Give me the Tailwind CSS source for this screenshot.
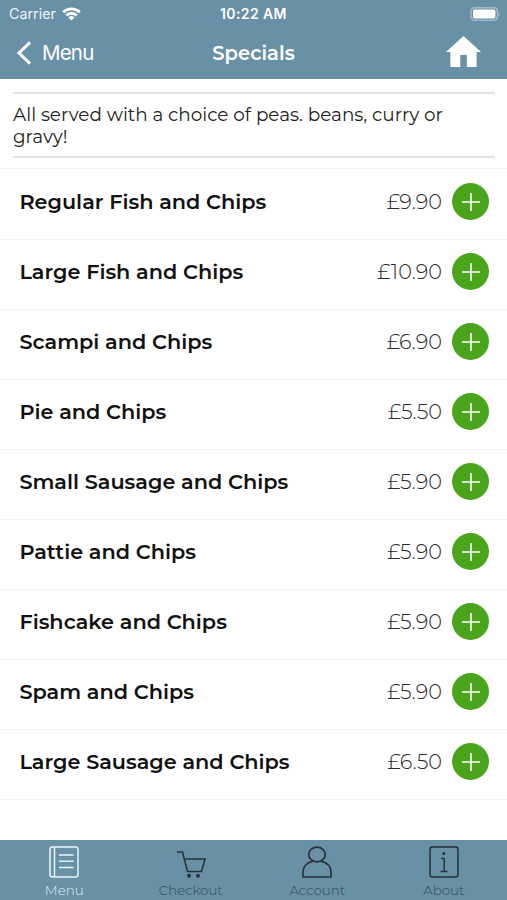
<!DOCTYPE html>
<html lang="en">
<head>
    <meta charset="UTF-8">
    <meta name="viewport" content="width=device-width, initial-scale=1.0">
    <script src="https://cdn.jsdelivr.net/npm/@tailwindcss/browser@4"></script>
    <title>Specials</title>
</head>
<body class="flex flex-col h-screen overflow-hidden bg-white font-['Montserrat','Inter',sans-serif] text-[#111]">
    <header class="h-[79px] shrink-0 bg-[#6890a7] text-white">
        <div class="grid grid-cols-3 items-center h-[27px] px-[9px] font-['Inter',sans-serif]">
            <div class="flex items-center gap-[6px] text-[14.3px] text-[#eef4f7]">
                <span>Carrier</span>
                <svg class="w-[19px] h-[14px]" viewBox="0 0 19 14" fill="none" stroke="#fff" stroke-width="2.7">
                    <path d="M1.2 5.2a12 12 0 0 1 16.6 0M4.3 8.5a7.6 7.6 0 0 1 10.4 0"/>
                    <path d="M9.5 13.6 6.4 10.4a4.6 4.6 0 0 1 6.2 0z" fill="#fff" stroke="none"/>
                </svg>
            </div>
            <span class="text-center text-[14px] tracking-[0.4px] font-semibold">10:22 AM</span>
            <svg class="justify-self-end -mr-[3px] w-[31px] h-[14px]" viewBox="0 0 31 14">
                <rect x="1" y=".8" width="26.5" height="12.4" rx="3.6" fill="none" stroke="#a0bac8" stroke-width="1.6"/>
                <rect x="3" y="2.6" width="22.4" height="8.8" rx="1.6" fill="#fff"/>
                <path d="M28.8 5a2.4 2.4 0 0 1 0 4z" fill="#a0bac8"/>
            </svg>
        </div>
        <div class="grid grid-cols-3 items-center h-[51px] pl-4 pr-[26px]">
            <button class="flex items-center gap-[10px] text-[20.5px] tracking-[-0.8px] font-['Inter',sans-serif]">
                <svg class="w-4 h-6" viewBox="0 0 16 24" fill="none" stroke="currentColor" stroke-width="3"><path d="M14 1.3 3 12l11 10.7"/></svg>
                <span class="pt-[2px]">Menu</span>
            </button>
            <h1 class="pl-[10px] pt-[2px] text-center text-[19.6px] font-semibold">Specials</h1>
            <svg class="justify-self-end mb-[2px] w-[35px] h-[31px]" viewBox="0 0 35 31" fill="currentColor"><path d="M17.5 0 35 16h-4.4v15H20.8V19h-6.5v12H4.4V16H0z"/></svg>
        </div>
    </header>

    <main class="flex-1">
        <p class="ml-[13px] mr-3 mt-[13px] mb-[11px] h-[66px] border-y-2 border-[#e2e4e4] pt-[10px] text-[18.4px] leading-[22px] text-[#222]">All served with a choice of peas. beans, curry or gravy!</p>
        <ul id="items" class="-mt-px border-t border-[#f4f4f4] pt-px"></ul>
    </main>

    <nav class="grid grid-cols-4 h-[60px] shrink-0 bg-[#6890a7] pl-[1px] text-[13.4px] font-light text-[#354c5a]">
        <a class="flex flex-col items-center gap-[2px] pt-[6px] text-[#dcebf3]">
            <svg class="w-8 h-8" viewBox="0 0 32 32" fill="none" stroke="#e9f4fa" stroke-width="1.5"><rect x="2" y="1" width="28" height="30" rx="2.5"/><path d="M6.5 1v30M11 9h14.5M11 15.2h14.5M11 21.4h14.5"/></svg>
            <span>Menu</span>
        </a>
        <a class="flex flex-col items-center gap-[2px] pt-[6px]">
            <svg class="w-8 h-8" viewBox="0 0 32 32" fill="none" stroke="#283238" stroke-width="1.6"><path d="M2 6h5.5l5 19.5h14L30 13H9.5"/><circle cx="14" cy="29.7" r="1.2" fill="#283238"/><circle cx="23" cy="29.7" r="1.2" fill="#283238"/></svg>
            <span>Checkout</span>
        </a>
        <a class="flex flex-col items-center gap-[2px] pt-[6px]">
            <svg class="w-8 h-8" viewBox="0 0 32 32" fill="none" stroke="#283238" stroke-width="1.7"><ellipse cx="16" cy="8.5" rx="8.3" ry="7.3"/><path d="M12 15.2C6 16.5 2 20.5 2 26.5V31h28v-4.5c0-6-4-10-10-11.300"/></svg>
            <span>Account</span>
        </a>
        <a class="flex flex-col items-center gap-[2px] pt-[6px]">
            <svg class="w-8 h-8" viewBox="0 0 32 32" fill="none" stroke="#283238" stroke-width="1.5"><rect x="2" y="1" width="28" height="30" rx="2.5"/><path d="M13 12.5h3.2V25M12.5 25.5h7"/><circle cx="15.8" cy="7.5" r=".8" fill="#283238"/></svg>
            <span>About</span>
        </a>
    </nav>

    <script>
        const items = [
            ["Regular Fish and Chips", "9.90"],
            ["Large Fish and Chips", "10.90"],
            ["Scampi and Chips", "6.90"],
            ["Pie and Chips", "5.50"],
            ["Small Sausage and Chips", "5.90"],
            ["Pattie and Chips", "5.90"],
            ["Fishcake and Chips", "5.90"],
            ["Spam and Chips", "5.90"],
            ["Large Sausage and Chips", "6.50"],
        ];

        document.getElementById('items').innerHTML = items.map(([name, price]) => `
            <li class="flex items-center h-[70px] border-b border-[#f4f4f4] pl-[19.4px] pr-[18px] pb-[6px]">
                <span class="flex-1 text-[20.8px] font-semibold">${name}</span>
                <span class="mr-[10px] pt-px text-[20.8px] font-light text-[#2a2a2a]">£${price}</span>
                <button class="flex items-center justify-center size-[37px] rounded-full bg-[#4aa51c]">
                    <svg class="size-[18px]" viewBox="0 0 18 18" stroke="#fff" stroke-width="1.7"><path d="M9 0v18M0 9h18"/></svg>
                </button>
            </li>`).join('');
    </script>
</body>
</html>
